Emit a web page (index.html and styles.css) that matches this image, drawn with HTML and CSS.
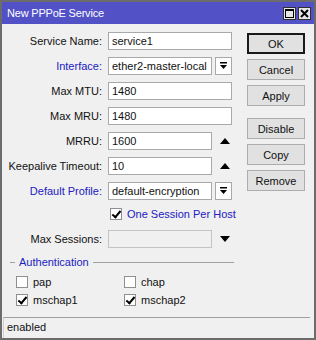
FILE: index.html
```html
<!DOCTYPE html>
<html lang="en">
  <head>
    <meta charset="UTF-8" />
    <title>New PPPoE Service</title>
    <link rel="stylesheet" href="styles.css">
  </head>
  <body>
    <div class="window">
      <header class="titlebar">
        <span class="title">New PPPoE Service</span>
        <div class="win-btns">
          <span class="win-btn">
            <svg width="9" height="9" viewBox="0 0 9 9"><rect x="0.5" y="0.5" width="8" height="8" fill="none" stroke="#000" stroke-width="1"/><rect x="0" y="0" width="9" height="2" fill="#000"/></svg>
          </span>
          <span class="win-btn">
            <svg width="9" height="9" viewBox="0 0 9 9"><path d="M1 1 L8 8 M8 1 L1 8" stroke="#000" stroke-width="2"/></svg>
          </span>
        </div>
      </header>

      <div class="main">
        <form class="form">
          <div class="row">
            <span class="label">Service Name:</span>
            <span class="field">service1</span>
          </div>
          <div class="row">
            <span class="label blue">Interface:</span>
            <span class="field short">ether2-master-local</span>
            <span class="drop">
              <svg width="7" height="8" viewBox="0 0 7 8"><rect x="0" y="0" width="7" height="1.5" fill="#000"/><polygon points="0,3 7,3 3.5,7" fill="#000"/></svg>
            </span>
          </div>
          <div class="row">
            <span class="label">Max MTU:</span>
            <span class="field">1480</span>
          </div>
          <div class="row">
            <span class="label">Max MRU:</span>
            <span class="field">1480</span>
          </div>
          <div class="row">
            <span class="label">MRRU:</span>
            <span class="field short">1600</span>
            <span class="arrow">
              <svg width="10" height="6" viewBox="0 0 10 6"><polygon points="0,6 10,6 5,0" fill="#000"/></svg>
            </span>
          </div>
          <div class="row">
            <span class="label">Keepalive Timeout:</span>
            <span class="field short">10</span>
            <span class="arrow">
              <svg width="10" height="6" viewBox="0 0 10 6"><polygon points="0,6 10,6 5,0" fill="#000"/></svg>
            </span>
          </div>
          <div class="row">
            <span class="label blue">Default Profile:</span>
            <span class="field short">default-encryption</span>
            <span class="drop">
              <svg width="7" height="8" viewBox="0 0 7 8"><rect x="0" y="0" width="7" height="1.5" fill="#000"/><polygon points="0,3 7,3 3.5,7" fill="#000"/></svg>
            </span>
          </div>
          <div class="row check-row">
            <label class="check blue">
              <span class="box checked"></span>
              One Session Per Host
            </label>
          </div>
          <div class="row">
            <span class="label">Max Sessions:</span>
            <span class="field short disabled"></span>
            <span class="arrow">
              <svg width="10" height="6" viewBox="0 0 10 6"><polygon points="0,0 10,0 5,6" fill="#000"/></svg>
            </span>
          </div>

          <div class="group">
            <div class="legend">
              <span class="dash"></span>
              <span class="blue">Authentication</span>
              <span class="line"></span>
            </div>
            <div class="auth-grid">
              <label class="check"><span class="box"></span>pap</label>
              <label class="check"><span class="box"></span>chap</label>
              <label class="check"><span class="box checked"></span>mschap1</label>
              <label class="check"><span class="box checked"></span>mschap2</label>
            </div>
          </div>
        </form>

        <div class="buttons">
          <button type="button" class="btn default">OK</button>
          <button type="button" class="btn">Cancel</button>
          <button type="button" class="btn">Apply</button>
          <button type="button" class="btn spaced">Disable</button>
          <button type="button" class="btn">Copy</button>
          <button type="button" class="btn">Remove</button>
        </div>
      </div>

      <div class="status">enabled</div>
    </div>
  </body>
</html>
```

FILE: styles.css
```css
* {
    margin: 0;
    padding: 0;
    box-sizing: border-box;
}
body {
    width: 316px;
    height: 340px;
    font-family: "Liberation Sans", Arial, sans-serif;
    font-size: 11px;
    color: #111;
    background: #f0f0f0;
}
.window {
    width: 316px;
    height: 340px;
    border: 2px solid #6c6c6c;
    background: #f0f0f0;
    display: flex;
    flex-direction: column;
}
.titlebar {
    height: 22px;
    background: #5252c6;
    color: #fff;
    display: flex;
    align-items: center;
    justify-content: space-between;
    padding: 0 3px 0 5px;
}
.titlebar .title {
    font-size: 11px;
    letter-spacing: -0.2px;
}
.win-btns {
    display: flex;
    gap: 2px;
}
.win-btn {
    width: 13px;
    height: 13px;
    background: #e6e6e6;
    border: 1px solid #303030;
    display: flex;
    align-items: center;
    justify-content: center;
}

.main {
    flex: 1;
    display: flex;
    padding-top: 8px;
}
.form {
    width: 245px;
}
.row {
    display: flex;
    align-items: center;
    height: 18px;
    margin-bottom: 7px;
}
.label {
    width: 106px;
    padding-right: 6px;
    text-align: right;
}
.blue {
    color: #2020c0;
}
.field {
    width: 124px;
    height: 18px;
    background: #fff;
    border: 1px solid #a9a9a9;
    padding-left: 3px;
    line-height: 16px;
    white-space: nowrap;
    overflow: hidden;
}
.field.short {
    width: 104px;
}
.field.disabled {
    background: #f0f0f0;
    border-color: #c4c4c4;
}
.drop {
    width: 17px;
    height: 18px;
    margin-left: 3px;
    background: #fff;
    border: 1px solid #a9a9a9;
    display: flex;
    align-items: center;
    justify-content: center;
}
.arrow {
    width: 20px;
    margin-left: 3px;
    display: flex;
    justify-content: center;
}

.check-row {
    height: 14px;
    margin-top: 1px;
    margin-bottom: 9px;
    padding-left: 108px;
}
.check {
    display: flex;
    align-items: center;
    gap: 5px;
}
.box {
    width: 12px;
    height: 12px;
    background: #fff;
    border: 1px solid #8e8f8f;
    position: relative;
}
.box.checked::after {
    content: "";
    position: absolute;
    left: 3px;
    top: 0px;
    width: 3px;
    height: 7px;
    border: solid #000;
    border-width: 0 2px 2px 0;
    transform: rotate(40deg);
}

.group {
    margin: 5px 13px 0 0;
    padding-left: 6px;
}
.legend {
    display: flex;
    align-items: center;
    height: 14px;
}
.legend .dash {
    width: 5px;
    border-top: 1px solid #a0a0a0;
    margin-right: 4px;
    margin-left: 2px;
}
.legend .line {
    flex: 1;
    border-top: 1px solid #a0a0a0;
    margin-left: 4px;
}
.auth-grid {
    display: grid;
    grid-template-columns: 108px 108px;
    row-gap: 6px;
    padding: 7px 0 0 8px;
}

.buttons {
    width: 58px;
    display: flex;
    flex-direction: column;
    gap: 5px;
    padding-top: 1px;
}
.btn {
    height: 21px;
    font-family: "Liberation Sans", Arial, sans-serif;
    font-size: 11px;
    color: #111;
    background: #e1e1e1;
    border: 1px solid #adadad;
}
.btn.default {
    border: 2px solid #1a1a1a;
}
.btn.spaced {
    margin-top: 7px;
}

.status {
    height: 21px;
    margin: 0 4px 0 1px;
    border-top: 1px solid #a0a0a0;
    border-left: 1px solid #d0d0d0;
    padding-left: 3px;
    line-height: 19px;
}
```
